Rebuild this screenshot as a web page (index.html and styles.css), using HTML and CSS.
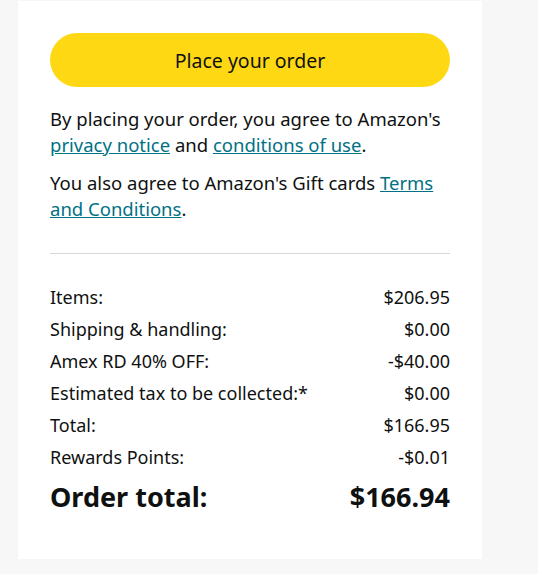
FILE: index.html
```html
<!DOCTYPE html>
<html lang="en">
<head>
<meta charset="utf-8">
<title>Place your order</title>
<link rel="stylesheet" href="styles.css">
</head>
<body>
<div class="card">
  <button class="place-btn" type="button">Place your order</button>
  <p class="legal">By placing your order, you agree to Amazon's <a href="#">privacy notice</a> and <a href="#">conditions of use</a>.</p>
  <p class="legal second">You also agree to Amazon's Gift cards <a href="#">Terms</a> <a href="#">and Conditions</a>.</p>
  <hr class="divider">
  <div class="summary">
    <div class="row"><span>Items:</span><span>$206.95</span></div>
    <div class="row"><span>Shipping &amp; handling:</span><span>$0.00</span></div>
    <div class="row"><span>Amex RD 40% OFF:</span><span>-$40.00</span></div>
    <div class="row"><span>Estimated tax to be collected:*</span><span>$0.00</span></div>
    <div class="row"><span>Total:</span><span>$166.95</span></div>
    <div class="row"><span>Rewards Points:</span><span>-$0.01</span></div>
    <div class="row total"><span>Order total:</span><span>$166.94</span></div>
  </div>
</div>
</body>
</html>
```
FILE: styles.css
```css
html, body {
  margin: 0;
  padding: 0;
  background: #f7f7f7;
}
body {
  font-family: "Noto Sans", "Open Sans", sans-serif;
  color: #0f1111;
  font-size: 18px;
  line-height: 26px;
}
.card {
  box-sizing: border-box;
  margin: 1px 0 0 18px;
  width: 464px;
  height: 558px;
  background: #fff;
  padding: 32px 32px 0 32px;
}
.place-btn {
  display: block;
  width: 100%;
  height: 54px;
  border: none;
  border-radius: 27px;
  background: #ffd814;
  color: #0f1111;
  font-family: inherit;
  font-size: 19.5px;
  padding: 0;
  cursor: pointer;
}
.legal {
  margin: 19px 0 0 0;
  font-size: 18.5px;
}
.legal.second {
  margin-top: 12px;
}
.legal a {
  color: #007185;
  text-decoration: underline;
}
.divider {
  border: none;
  border-top: 1px solid #d5d9d9;
  margin: 31px 0 0 0;
  height: 0;
}
.summary {
  margin-top: 27px;
}
.row {
  display: flex;
  justify-content: space-between;
  line-height: 32px;
}
.row.total {
  font-weight: 700;
  font-size: 27px;
  line-height: 40px;
  margin-top: 4px;
}
```
